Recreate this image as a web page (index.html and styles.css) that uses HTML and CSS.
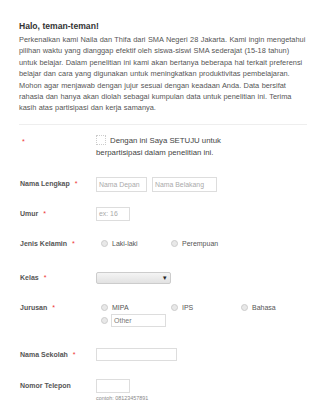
FILE: index.html
```html
<!DOCTYPE html>
<html lang="id">
<head>
    <meta charset="UTF-8">
    <meta name="viewport" content="width=device-width, initial-scale=1.0">
    <title>Kuesioner Penelitian</title>
    <link rel="stylesheet" href="styles.css">
</head>
<body>

    <header class="intro">
        <h1>Halo, teman-teman!</h1>
        <p>Perkenalkan kami Naila dan Thifa dari SMA Negeri 28 Jakarta. Kami ingin mengetahui pilihan waktu yang dianggap efektif oleh siswa-siswi SMA sederajat (15-18 tahun) untuk belajar. Dalam penelitian ini kami akan bertanya beberapa hal terkait preferensi belajar dan cara yang digunakan untuk meningkatkan produktivitas pembelajaran. Mohon agar menjawab dengan jujur sesuai dengan keadaan Anda. Data bersifat rahasia dan hanya akan diolah sebagai kumpulan data untuk penelitian ini. Terima kasih atas partisipasi dan kerja samanya.</p>
    </header>

    <form class="form">
        <div class="row row-agree">
            <div class="label"><span class="req">*</span></div>
            <div class="field agree"><span class="box"></span>Dengan ini Saya SETUJU untuk berpartisipasi dalam penelitian ini.</div>
        </div>

        <div class="row row-nama">
            <div class="label">Nama Lengkap <span class="req">*</span></div>
            <div class="field">
                <span class="input w-first">Nama Depan</span>
                <span class="input w-last">Nama Belakang</span>
            </div>
        </div>

        <div class="row row-umur">
            <div class="label">Umur <span class="req">*</span></div>
            <div class="field">
                <span class="input w-small">ex: 16</span>
            </div>
        </div>

        <div class="row row-jenis">
            <div class="label">Jenis Kelamin <span class="req">*</span></div>
            <div class="field options">
                <span class="opt"><span class="radio"></span>Laki-laki</span>
                <span class="opt"><span class="radio"></span>Perempuan</span>
            </div>
        </div>

        <div class="row row-kelas">
            <div class="label">Kelas <span class="req">*</span></div>
            <div class="field">
                <span class="select"><span class="arrow">&#9662;</span></span>
            </div>
        </div>

        <div class="row row-jurusan">
            <div class="label">Jurusan <span class="req">*</span></div>
            <div class="field">
                <div class="options">
                    <span class="opt"><span class="radio"></span>MIPA</span>
                    <span class="opt"><span class="radio"></span>IPS</span>
                    <span class="opt"><span class="radio"></span>Bahasa</span>
                </div>
                <div class="other">
                    <span class="radio"></span><span class="input w-other">Other</span>
                </div>
            </div>
        </div>

        <div class="row row-sekolah">
            <div class="label">Nama Sekolah <span class="req">*</span></div>
            <div class="field">
                <span class="input w-wide"></span>
            </div>
        </div>

        <div class="row row-telepon">
            <div class="label">Nomor Telepon</div>
            <div class="field">
                <span class="input w-small"></span>
                <div class="hint">contoh: 08123457891</div>
            </div>
        </div>
    </form>

</body>
</html>
```

FILE: styles.css
```css
body { font-family: "Liberation Sans", Arial, sans-serif; font-size: 7px; line-height: 1.2; margin: 0; padding: 0 18px 0 19px; background: #fff; color: #555; }
.intro { padding-top: 20px; padding-bottom: 10px; border-bottom: 1px solid #eee; }
.intro h1 { font-size: 8.6px; color: #333; margin: 0 0 2px 0; line-height: 12px; }
.intro p { font-size: 7.4px; line-height: 11.4px; word-spacing: 0.35px; margin: 0; color: #555; }
.form { padding-top: 10px; }
.row { display: grid; grid-template-columns: 77px 1fr; align-items: center; min-height: 14px; }
.label { font-size: 7px; font-weight: bold; color: #555; padding-left: 1px; }
.req { color: #e33; margin-left: 3px; font-weight: normal; }
.row-agree { align-items: start; }
.row-agree .req { margin-left: 2px; }
.row-agree .label { padding-top: 3px; }
.agree { font-size: 7.8px; line-height: 12px; color: #444; width: 136px; }
.box { display: inline-block; width: 8px; height: 8px; border: 1px dotted #ccc; vertical-align: -2px; margin-right: 4px; }
.row-nama { margin-top: 18px; min-height: 15px; }
.row-umur { margin-top: 15px; }
.row-jenis { margin-top: 16px; }
.row-kelas { margin-top: 20px; }
.row-jurusan { margin-top: 18px; align-items: start; }
.row-jurusan .label { padding-top: 1px; }
.row-sekolah { margin-top: 21px; }
.row-telepon { margin-top: 17px; align-items: start; }
.row-telepon .label { padding-top: 3px; }
.input { display: inline-block; box-sizing: border-box; height: 15px; border: 1px solid #ddd; font-size: 6.9px; line-height: 13px; color: #aaa; padding: 0 2px; vertical-align: middle; }
.w-first { width: 51px; margin-right: 3px; }
.w-last { width: 65px; }
.w-small { width: 34px; height: 14px; line-height: 12px; }
.w-wide { width: 81px; height: 13px; }
.w-other { width: 55px; height: 13px; font-size: 7px; line-height: 11px; color: #777; }
.options { display: flex; font-size: 7px; color: #555; line-height: 10px; }
.opt { width: 70px; display: flex; align-items: center; }
.radio { display: inline-block; width: 5px; height: 5px; border-radius: 50%; border: 1px solid #ccc; background: #e8e8e8; margin: 0 4px 0 5px; }
.select { display: inline-block; position: relative; width: 75px; height: 12px; box-sizing: border-box; border: 1px solid #ccc; border-radius: 2px; background: linear-gradient(#f4f4f4, #e2e2e2); vertical-align: middle; }
.arrow { position: absolute; right: 3px; top: 0; font-size: 7px; line-height: 10px; color: #222; }
.other { display: flex; align-items: center; margin-top: 1px; }
.other .radio { margin-right: 3px; }
.hint { font-size: 5.4px; color: #888; margin-top: 2px; }
```
